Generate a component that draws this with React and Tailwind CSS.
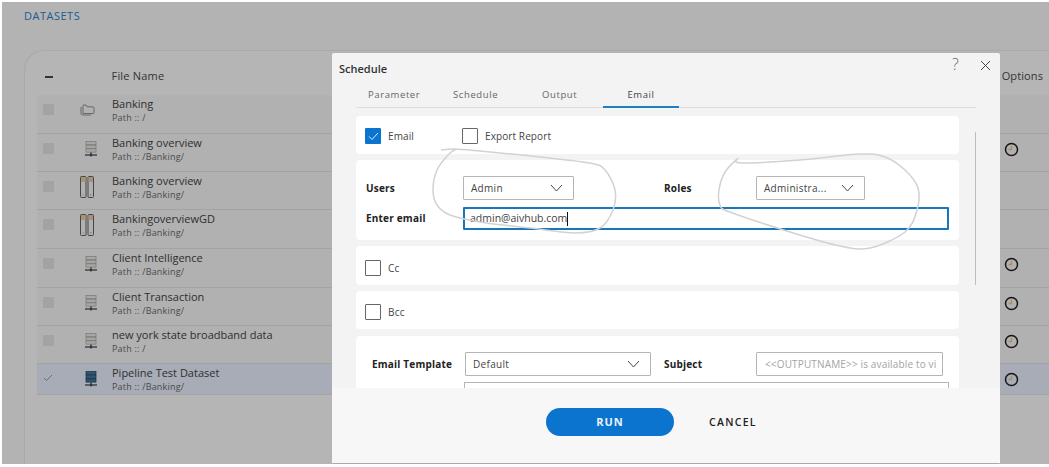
const rows = [
  { name: "Banking", path: "Path :: /", icon: "folder", h: "h-[39px]" },
  { name: "Banking overview", path: "Path :: /Banking/", icon: "server", clock: true, h: "h-[38px]" },
  { name: "Banking overview", path: "Path :: /Banking/", icon: "columns", h: "h-[38px]" },
  { name: "BankingoverviewGD", path: "Path :: /Banking/", icon: "columns", h: "h-[39px]" },
  { name: "Client Intelligence", path: "Path :: /Banking/", icon: "server", clock: true, h: "h-[39px]" },
  { name: "Client Transaction", path: "Path :: /Banking/", icon: "server", clock: true, h: "h-[38px]" },
  { name: "new york state broadband data", path: "Path :: /", icon: "server", clock: true, h: "h-[38px]" },
  { name: "Pipeline Test Dataset", path: "Path :: /Banking/", icon: "serverDark", clock: true, selected: true, h: "h-[31px]" },
];

const leftLoop = [[441,150],[455,149],[480,151],[540,157],[590,163],[605,170],[615,190],[613,210],[600,228],[575,233],[530,228],[480,222],[450,215],[437,205],[433,190],[437,170],[448,155],[456,149]];
const rightLoop = [[738,158],[741,163],[800,160],[860,154],[885,157],[905,170],[918,188],[917,210],[905,232],[870,248],[840,246],[790,232],[730,212],[720,205],[719,190],[725,172],[738,158]];

// smooth line through the points
function smooth(pts) {
  let d = `M${pts[0][0]} ${pts[0][1]}`;
  for (let i = 0; i < pts.length - 1; i++) {
    const p0 = pts[i - 1] || pts[i];
    const p1 = pts[i];
    const p2 = pts[i + 1];
    const p3 = pts[i + 2] || p2;
    d += `C${p1[0] + (p2[0] - p0[0]) / 6} ${p1[1] + (p2[1] - p0[1]) / 6} ${p2[0] - (p3[0] - p1[0]) / 6} ${p2[1] - (p3[1] - p1[1]) / 6} ${p2[0]} ${p2[1]}`;
  }
  return d;
}

function RowIcon({ type }) {
  if (type === "folder") {
    return (
      <svg width="15" height="12" viewBox="0 0 15 12" fill="none" stroke="#555" strokeWidth="0.8">
        <path d="M3 9.5V1.8Q3 1 3.8 1H6L7.2 2.8H13.2Q14 2.8 14 3.6V8.7Q14 9.5 13.2 9.5Z" />
        <path d="M1 3V9.5Q1 11 2.5 11H11" />
      </svg>
    );
  }
  if (type === "columns") {
    return (
      <svg width="14" height="22" viewBox="0 0 14 22" fill="none" stroke="#3a3a3a" strokeWidth="0.9">
        <rect x="0.5" y="0.5" width="5.5" height="21" rx="1" />
        <rect x="8" y="0.5" width="5.5" height="21" rx="1" />
        <rect x="1" y="1" width="4.5" height="5" fill="#a8946f" stroke="none" />
        <rect x="8.5" y="1" width="4.5" height="5" fill="#a8917c" stroke="none" />
        <rect x="2.5" y="18" width="1.5" height="1.5" fill="#a8a05f" stroke="none" />
        <rect x="10" y="18" width="1.5" height="1.5" fill="#8a8a8a" stroke="none" />
      </svg>
    );
  }
  const dark = type === "serverDark";
  return (
    <svg width="12" height="16" viewBox="0 0 12 16" fill="none" stroke={dark ? "#16303f" : "#777"} strokeWidth="0.7">
      <rect x="1" y="0.5" width="10" height="3.2" fill={dark ? "#2f5570" : "#a8a8a8"} />
      <rect x="1" y="4.2" width="10" height="3.2" fill={dark ? "#2f5570" : "#aaa59c"} />
      <rect x="1" y="7.9" width="10" height="3.2" fill={dark ? "#2f5570" : "#a8a8a8"} />
      <path d="M6 11.5V15.5M0 14H12" stroke="#111" strokeWidth="1.1" />
    </svg>
  );
}

function Clock() {
  return (
    <svg width="15" height="15" viewBox="0 0 15 15" fill="none">
      <circle cx="7.5" cy="7.5" r="6" stroke="#161616" strokeWidth="1.5" />
      <path d="M7.5 3.8V7.5H4.6" stroke="#a68f63" strokeWidth="1.3" />
    </svg>
  );
}

function Chevron() {
  return (
    <svg width="13" height="8" viewBox="0 0 13 8" fill="none" stroke="#444" strokeWidth="1">
      <path d="M1 1L6.5 7L12 1" />
    </svg>
  );
}

function Box({ checked }) {
  if (checked) {
    return (
      <span className="w-4 h-4 rounded-[1px] bg-[#0b74cf] flex items-center justify-center shrink-0">
        <svg width="11" height="9" viewBox="0 0 11 9" fill="none" stroke="#dcecf9" strokeWidth="1">
          <path d="M1 4.5L4 7.5L10 1" />
        </svg>
      </span>
    );
  }
  return <span className="w-4 h-4 rounded-[1px] border border-[#666] bg-white shrink-0" />;
}

function Select({ value, className }) {
  return (
    <div className={`h-6 border border-[#b5b5b5] rounded-[1px] bg-white flex items-center justify-between pl-[7px] pr-[10px] text-[10px] tracking-[0.3px] text-[#444] ${className}`}>
      <span className="pt-[1px]">{value}</span>
      <Chevron />
    </div>
  );
}

const labelCls = "text-[10px] font-bold tracking-[0.2px] text-[#222]";

export default function App() {
  return (
    <div className="relative w-[1049px] h-[467px] overflow-hidden bg-white pl-[2px] pt-[2px] font-['Open_Sans','Noto_Sans',sans-serif] text-[#2a2a2a]">
      <div className="h-[462px] overflow-hidden bg-[#b3b3b3]">
        <div className="pl-[22px] pt-[6px] h-[48px] text-[11px] font-medium tracking-[0.5px] text-[#1c5c92]">DATASETS</div>
        <div className="ml-[22px] h-[414px] border-l border-t border-[#a9a9a9] rounded-tl-[20px] bg-[#b5b5b5] pl-[12px]">
          <div className="h-[44px] pt-[7px] flex items-center text-[11px] tracking-[0.2px] text-[#333]">
            <span className="w-[74.5px] pl-2">
              <span className="block w-2 h-[2px] bg-[#333]" />
            </span>
            <span className="flex-1">File Name</span>
            <span className="mr-[6px] text-[11px] tracking-[0.1px]">Options</span>
          </div>
          {rows.map((r, i) => (
            <div
              key={i}
              className={`${r.h} flex items-start border-b border-[#a3a3a3] ${r.selected ? "bg-[#a8acb6]" : "bg-[#b1b1b1]"}`}
            >
              <span className="w-[33px] pl-[6px] h-[28px] flex items-center shrink-0">
                {r.selected ? (
                  <svg width="10" height="8" viewBox="0 0 10 8" fill="none" stroke="#555" strokeWidth="0.7">
                    <path d="M1 4L3.5 6.5L9 1" />
                  </svg>
                ) : (
                  <span className="w-[11px] h-[11px] rounded-[1px] bg-[#a3a3a3]" />
                )}
              </span>
              <span className={`w-[42px] h-[30px] shrink-0 flex items-center ${r.icon === "folder" || r.icon === "columns" ? "pl-[10px]" : "pl-[15px]"}`}>
                <RowIcon type={r.icon} />
              </span>
              <div className="flex-1 min-w-0 pt-[2px]">
                <div className="text-[11px] leading-[14px] text-[#2f2f2f]">{r.name}</div>
                <div className="text-[9px] leading-[14px] tracking-[0.2px] text-[#4a4a4a]">{r.path}</div>
              </div>
              <span className="w-[15px] h-[30px] flex items-center mr-[30px] shrink-0">{r.clock && <Clock />}</span>
            </div>
          ))}
        </div>
      </div>

      {/* dialog */}
      <div className="absolute left-[332px] top-[53px] w-[668px] h-[411px] rounded-[2px] border-b border-[#aaa] bg-[#f3f3f3] flex flex-col">
        <div className="relative h-[31px] pl-[7px] pt-[7px] text-[11px] font-semibold text-[#333] leading-[18px]">
          Schedule
          <span className="absolute left-[620px] top-[1px] text-[16px] font-light leading-5 text-[#666]">?</span>
          <svg className="absolute left-[648px] top-[7px]" width="11" height="11" viewBox="0 0 11 11" stroke="#444" strokeWidth="1">
            <path d="M1 1L10 10M10 1L1 10" />
          </svg>
        </div>
        <div className="ml-6 w-[620px] h-[24px] flex border-b border-[#dcdcdc] text-[9.5px] tracking-[0.6px] text-[#666]">
          <span className="w-[85px] pl-[12px] pt-[4px]">Parameter</span>
          <span className="w-[88px] pl-[12px] pt-[4px]">Schedule</span>
          <span className="w-[74px] pl-[13px] pt-[4px]">Output</span>
          <span className="w-[76px] h-[24px] text-center pt-[4px] border-b-2 border-[#1f7fc4] text-[#444]">Email</span>
        </div>

        <div className="relative flex-1 min-h-0 overflow-hidden pl-6 pt-2">
          <div className="w-[603px] flex flex-col gap-[6px]">
            <div className="h-[38px] rounded-[4px] bg-white flex items-center pl-[9px] pt-[2px] text-[10px] tracking-[0.1px] text-[#444]">
              <Box checked />
              <span className="ml-[7px] w-[74px] pt-[1px]">Email</span>
              <Box />
              <span className="ml-[7px] pt-[1px]">Export Report</span>
            </div>
            <div className="h-[80px] rounded-[4px] bg-white pl-[10px] pt-4 flex flex-col gap-[7px]">
              <div className="flex items-center">
                <span className={`${labelCls} w-[97px]`}>Users</span>
                <Select value="Admin" className="w-[111px]" />
                <span className={`${labelCls} ml-[90px] w-[92px]`}>Roles</span>
                <Select value="Administra..." className="w-[109px]" />
              </div>
              <div className="flex items-center">
                <span className={`${labelCls} w-[97px]`}>Enter email</span>
                <div className="w-[486px] h-[23px] border-2 border-[#1777bd] rounded-[1px] flex items-center pl-[5px] pt-[1px] text-[10.5px] text-[#444]">
                  admin@aivhub.com
                  <span className="w-px h-[14px] bg-[#111]" />
                </div>
              </div>
            </div>
            <div className="h-[39px] rounded-[4px] bg-white flex items-center pl-[9px] pt-1 text-[10px] tracking-[0.2px] text-[#444]">
              <Box />
              <span className="ml-[7px] pt-[1px]">Cc</span>
            </div>
            <div className="h-[38px] rounded-[4px] bg-white flex items-center pl-[9px] pt-1 text-[10px] tracking-[0.2px] text-[#444]">
              <Box />
              <span className="ml-[7px] pt-[1px]">Bcc</span>
            </div>
            <div className="h-[80px] mt-[1px] rounded-[4px] bg-white pt-4 pl-4">
              <div className="flex items-center">
                <span className={`${labelCls} w-[93px]`}>Email Template</span>
                <Select value="Default" className="w-[186px]" />
                <span className={`${labelCls} ml-[13px] w-[92px]`}>Subject</span>
                <div className="w-[187px] h-6 border border-[#b5b5b5] rounded-[1px] flex items-center pl-2 overflow-hidden whitespace-nowrap text-[10px] tracking-[0.15px] text-[#a3a3a3]">
                  {"<<OUTPUTNAME>> is available to vi"}
                </div>
              </div>
              <div className="mt-[6px] ml-[92px] w-[485px] h-10 border border-[#b5b5b5]" />
            </div>
          </div>
          <span className="absolute left-[643px] top-[24px] w-px h-[153px] bg-[#bdbdbd]" />
        </div>

        <div className="h-[75px] pt-5 flex items-start bg-[#f7f7f7]">
          <button className="ml-[214px] w-[128px] h-7 rounded-full bg-[#0b74cf] text-[11px] font-bold tracking-[1px] text-[#e8f3fb]">RUN</button>
          <button className="ml-[35px] h-7 pt-[1px] text-[10.5px] font-semibold tracking-[1.3px] text-[#222]">CANCEL</button>
        </div>
      </div>

      {/* pen marks drawn over the screenshot */}
      <svg className="absolute left-0 top-0 pointer-events-none" width="1049" height="467" fill="none" stroke="#d2d2d2" strokeWidth="1.5">
        <path d={smooth(leftLoop)} />
        <path d={smooth(rightLoop)} />
      </svg>
    </div>
  );
}
